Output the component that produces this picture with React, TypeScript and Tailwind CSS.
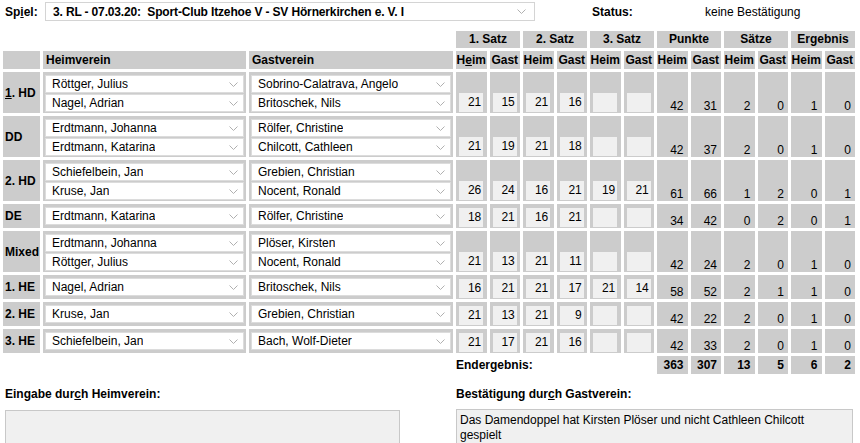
import type { ReactNode } from "react";

type Row = {
  label: ReactNode;
  home: string[];
  guest: string[];
  sets: string[];
  res: number[];
};

const rows: Row[] = [
  { label: <><u>1</u>. HD</>, home: ["Röttger, Julius", "Nagel, Adrian"], guest: ["Sobrino-Calatrava, Angelo", "Britoschek, Nils"], sets: ["21", "15", "21", "16", "", ""], res: [42, 31, 2, 0, 1, 0] },
  { label: "DD", home: ["Erdtmann, Johanna", "Erdtmann, Katarina"], guest: ["Rölfer, Christine", "Chilcott, Cathleen"], sets: ["21", "19", "21", "18", "", ""], res: [42, 37, 2, 0, 1, 0] },
  { label: "2. HD", home: ["Schiefelbein, Jan", "Kruse, Jan"], guest: ["Grebien, Christian", "Nocent, Ronald"], sets: ["26", "24", "16", "21", "19", "21"], res: [61, 66, 1, 2, 0, 1] },
  { label: "DE", home: ["Erdtmann, Katarina"], guest: ["Rölfer, Christine"], sets: ["18", "21", "16", "21", "", ""], res: [34, 42, 0, 2, 0, 1] },
  { label: "Mixed", home: ["Erdtmann, Johanna", "Röttger, Julius"], guest: ["Plöser, Kirsten", "Nocent, Ronald"], sets: ["21", "13", "21", "11", "", ""], res: [42, 24, 2, 0, 1, 0] },
  { label: "1. HE", home: ["Nagel, Adrian"], guest: ["Britoschek, Nils"], sets: ["16", "21", "21", "17", "21", "14"], res: [58, 52, 2, 1, 1, 0] },
  { label: "2. HE", home: ["Kruse, Jan"], guest: ["Grebien, Christian"], sets: ["21", "13", "21", "9", "", ""], res: [42, 22, 2, 0, 1, 0] },
  { label: "3. HE", home: ["Schiefelbein, Jan"], guest: ["Bach, Wolf-Dieter"], sets: ["21", "17", "21", "16", "", ""], res: [42, 33, 2, 0, 1, 0] },
];

const totals = [363, 307, 13, 5, 6, 2];
const groups = ["1. Satz", "2. Satz", "3. Satz", "Punkte", "Sätze", "Ergebnis"];

const Chevron = () => (
  <svg width="9" height="5" viewBox="0 0 9 5" className="shrink-0">
    <polyline points="0.5,0.5 4.5,4.5 8.5,0.5" fill="none" stroke="#b0b0b0" strokeWidth="1" />
  </svg>
);

const Select = ({ value }: { value: string }) => (
  <div className="flex h-[18px] items-center justify-between border border-[#dcdcdc] bg-white pl-[6px] pr-[5px] leading-[16px]">
    <span className="truncate">{value}</span>
    <Chevron />
  </div>
);

export default function App() {
  return (
    <div className="h-[443px] w-[860px] overflow-hidden bg-white font-['Liberation_Sans',Arial,sans-serif] text-[12px] text-black">
      <div className="flex items-center pt-[2px]">
        <div className="w-[45px] pl-[5px] font-bold">
          Sp<u>i</u>el:
        </div>
        <div className="flex h-[19px] w-[490px] items-center justify-between border border-[#d4d4d4] bg-white pl-[7px] pr-[8px]">
          <span className="whitespace-pre font-bold tracking-[-0.15px]">3. RL - 07.03.20:  Sport-Club Itzehoe V - SV Hörnerkirchen e. V. I</span>
          <Chevron />
        </div>
        <div className="ml-[57px] w-[113px] font-bold">Status:</div>
        <div>keine Bestätigung</div>
      </div>

      <table className="mt-[7px] w-[858px] table-fixed border-separate border-spacing-[3px]">
        <colgroup>
          <col className="w-[37px]" />
          <col className="w-[203px]" />
          <col className="w-[204px]" />
          {Array.from({ length: 12 }).map((_, i) => (
            <col key={i} />
          ))}
        </colgroup>
        <thead>
          <tr className="h-[17px]">
            <td colSpan={3} />
            {groups.map((g) => (
              <th key={g} colSpan={2} className="bg-[#cccccc] p-0 text-center font-bold leading-[17px]">
                {g}
              </th>
            ))}
          </tr>
          <tr className="h-[17px]">
            <th className="bg-[#cccccc] p-0" />
            <th className="bg-[#cccccc] p-0 pl-[3px] text-left font-bold">Heimverein</th>
            <th className="bg-[#cccccc] p-0 pl-[3px] text-left font-bold">Gastverein</th>
            {Array.from({ length: 12 }).map((_, i) => (
              <th key={i} className="bg-[#cccccc] p-0 text-center font-bold leading-[17px]">
                {i === 0 ? <>H<u>e</u>im</> : i % 2 === 0 ? "Heim" : "Gast"}
              </th>
            ))}
          </tr>
        </thead>
        <tbody>
          {rows.map((r, idx) => (
            <tr key={idx} className={r.home.length > 1 ? "h-[41px]" : "h-[24px]"}>
              <td className="bg-[#cccccc] p-0 pl-[2px] align-middle font-bold">{r.label}</td>
              <td className="bg-[#cccccc] p-0 px-[2px] pt-[3px] align-top">
                <div className="flex flex-col gap-[1px]">
                  {r.home.map((n) => (
                    <Select key={n} value={n} />
                  ))}
                </div>
              </td>
              <td className="bg-[#cccccc] p-0 px-[2px] pt-[3px] align-top">
                <div className="flex flex-col gap-[1px]">
                  {r.guest.map((n) => (
                    <Select key={n} value={n} />
                  ))}
                </div>
              </td>
              {r.sets.map((s, i) => (
                <td key={`s${i}`} className="bg-[#cccccc] p-0 pb-[1px] align-bottom">
                  <div className="mx-auto h-[19px] w-[24px] bg-[#f0f0f0] pr-[2px] text-right leading-[19px]">{s}</div>
                </td>
              ))}
              {r.res.map((v, i) => (
                <td key={`r${i}`} className="bg-[#cccccc] p-0 pr-[4px] text-right align-bottom leading-[14px]">
                  {v}
                </td>
              ))}
            </tr>
          ))}
          <tr className="h-[17px]">
            <td colSpan={3} />
            <td colSpan={6} className="p-0 font-bold">Endergebnis:</td>
            {totals.map((v, i) => (
              <td key={i} className="bg-[#cccccc] p-0 pr-[4px] text-right font-bold">
                {v}
              </td>
            ))}
          </tr>
        </tbody>
      </table>

      <div className="mt-[10px] flex">
        <div className="w-[456px] pl-[5px]">
          <div className="font-bold leading-[14px]">
            Eingabe dur<u>c</u>h Heimverein:
          </div>
          <div className="mt-[9px] h-[60px] w-[395px] border border-[#c8c8c8] bg-[#f0f0f0]" />
        </div>
        <div className="w-[397px]">
          <div className="font-bold leading-[14px]">
            Bestätigung dur<u>c</u>h Gastverein:
          </div>
          <div className="mt-[8px] h-[60px] w-[397px] border border-[#c8c8c8] bg-[#f0f0f0] pl-[3px] pr-[12px] pt-[3px] leading-[15px]">
            Das Damendoppel hat Kirsten Plöser und nicht Cathleen Chilcott gespielt
          </div>
        </div>
      </div>
    </div>
  );
}
